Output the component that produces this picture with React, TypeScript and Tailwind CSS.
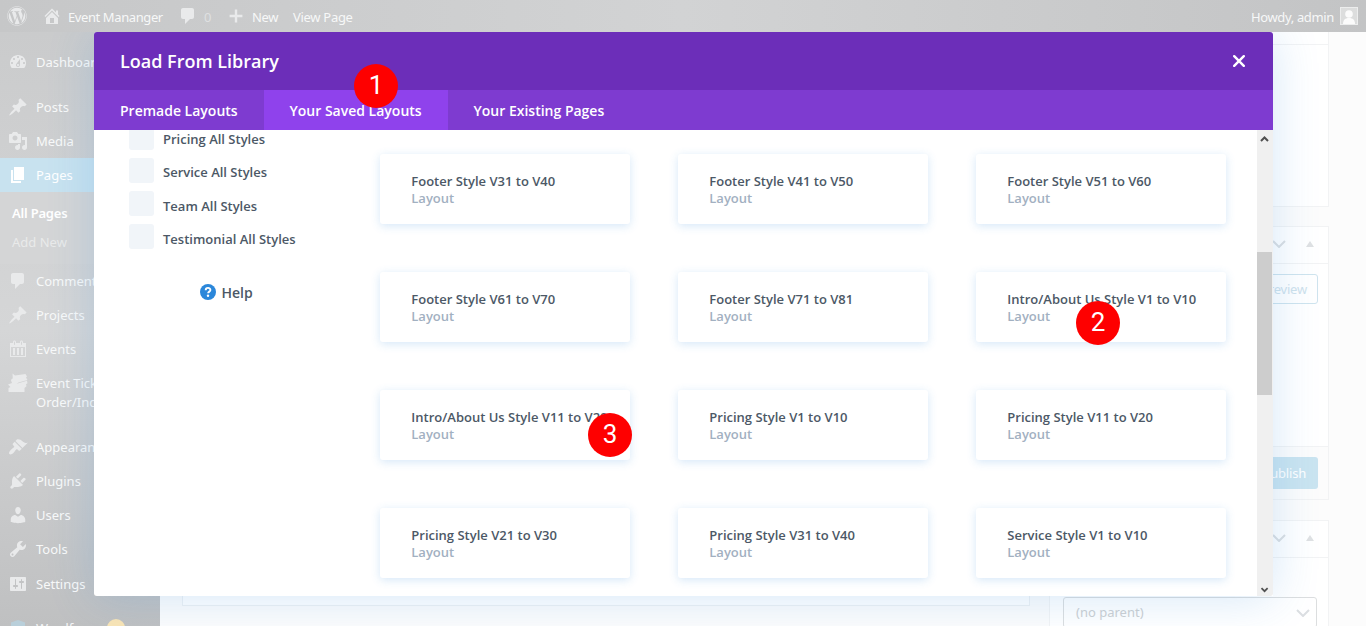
import type { ReactNode } from "react";
import { FaWordpress } from "react-icons/fa";

const ICONS = {
  dashboard:
    "M3.76 16h12.48c1.1-1.37 1.76-3.11 1.76-5 0-4.42-3.58-8-8-8s-8 3.58-8 8c0 1.89.66 3.63 1.76 5zM10 4c.55 0 1 .45 1 1s-.45 1-1 1-1-.45-1-1 .45-1 1-1zM6 6c.55 0 1 .45 1 1s-.45 1-1 1-1-.45-1-1 .45-1 1-1zm8 0c.55 0 1 .45 1 1s-.45 1-1 1-1-.45-1-1 .45-1 1-1zm-5.37 5.55L12 7v6c0 1.1-.9 2-2 2s-2-.9-2-2c0-.57.24-1.08.63-1.45zM4 10c.55 0 1 .45 1 1s-.45 1-1 1-1-.45-1-1 .45-1 1-1zm12 0c.55 0 1 .45 1 1s-.45 1-1 1-1-.45-1-1 .45-1 1-1zm-5 3c0-.55-.45-1-1-1s-1 .45-1 1 .45 1 1 1 1-.45 1-1z",
  pin: "M10.44 3.02l1.82-1.82 6.36 6.35-1.83 1.82c-1.05-.68-2.48-.57-3.41.36l-.75.75c-.92.93-1.04 2.35-.35 3.41l-1.83 1.82-2.41-2.41-2.8 2.79c-.42.42-3.38 2.71-3.8 2.29s1.86-3.39 2.28-3.81l2.79-2.79L4.1 9.36l1.83-1.82c1.05.69 2.48.57 3.4-.36l.75-.75c.93-.92 1.05-2.35.36-3.41z",
  media:
    "M13 11V4c0-.55-.45-1-1-1h-1.67L9 1H5L3.67 3H2c-.55 0-1 .45-1 1v7c0 .55.45 1 1 1h10c.55 0 1-.45 1-1zM7 4.5c1.38 0 2.5 1.12 2.5 2.5S8.38 9.5 7 9.5 4.5 8.38 4.5 7 5.62 4.5 7 4.5zM14 6h5v10.5c0 1.38-1.12 2.5-2.5 2.5S14 17.88 14 16.5s1.12-2.5 2.5-2.5c.17 0 .34.02.5.05V9h-3V6zm-4 8.05V13h2v3.5c0 1.38-1.12 2.5-2.5 2.5S7 17.88 7 16.5 8.12 14 9.5 14c.17 0 .34.02.5.05z",
  pages: "M6 15V2h10v13H6zm-1 1h8v2H3V5h2v11z",
  comments:
    "M5 2h9c1.1 0 2 .9 2 2v7c0 1.1-.9 2-2 2h-2l-5 5v-5H5c-1.1 0-2-.9-2-2V4c0-1.1.9-2 2-2z",
  calendar:
    "M15 4h3v14H2V4h3V3c0-.83.67-1.5 1.5-1.5S8 2.17 8 3v1h4V3c0-.83.67-1.5 1.5-1.5S15 2.17 15 3v1zM6 3v2.5c0 .28.22.5.5.5s.5-.22.5-.5V3c0-.28-.22-.5-.5-.5S6 2.72 6 3zm7 0v2.5c0 .28.22.5.5.5s.5-.22.5-.5V3c0-.28-.22-.5-.5-.5s-.5.22-.5.5zm4 14V8H3v9h14zM5 9h2v7H5zM9 9h2v7H9zM13 9h2v7h-2z",
  tickets:
    "M4.500 0.500l2.500 2L17.500 1l1.500 2.500-1 1 1.500 2.500-9 2.500-1.800 1.200L19 7.800l.5 2.500-1.500 1 .5 2L16.500 15v4H0.500v-4l2-1-2.500-2.500 4-1.500L2.800 7l2-1.800z",
  appearance:
    "M14.48 11.06L7.41 3.99l1.5-1.5c.5-.56 2.3-.47 3.51.32 1.21.8 1.43 1.28 2.91 2.1 1.18.64 2.45 1.26 4.45.85zm-.71.71L6.7 4.7 4.93 6.47c-.39.39-.39 1.02 0 1.41l1.06 1.06c.39.39.39 1.03 0 1.42-.6.6-1.43 1.11-2.21 1.69-.35.26-.7.53-1.01.84C1.43 14.23.4 16.08 1.4 17.07c.99 1 2.84-.03 4.18-1.36.31-.31.58-.66.85-1.02.57-.78 1.08-1.61 1.69-2.21.39-.39 1.02-.39 1.41 0l1.06 1.06c.39.39 1.02.39 1.41 0z",
  plugins:
    "M13.11 4.36L9.87 7.6 8 5.73l3.24-3.24c.35-.34 1.05-.2 1.56.32.52.51.66 1.21.31 1.55zm-8 1.77l.91-1.12 9.01 9.01-1.19.84c-.71.71-2.63 1.16-3.82 1.16H6.14L4.9 17.26c-.59.59-1.54.59-2.12 0-.59-.58-.59-1.53 0-2.12l1.24-1.24v-3.88c0-1.13.4-3.19 1.09-3.89zm7.26 3.97l3.24-3.24c.34-.35 1.04-.21 1.55.31.52.51.66 1.21.31 1.55l-3.24 3.25z",
  users:
    "M10 9.25c-2.27 0-2.73-3.44-2.73-3.44C7 4.02 7.82 2 9.97 2c2.16 0 2.98 2.02 2.71 3.81 0 0-.41 3.44-2.68 3.44zm0 2.57L12.72 10c2.39 0 4.52 2.33 4.52 4.53v2.49s-3.65 1.13-7.24 1.13c-3.65 0-7.24-1.13-7.24-1.13v-2.49c0-2.25 1.94-4.48 4.47-4.48z",
  tools:
    "M16.68 9.77c-1.34 1.34-3.3 1.67-4.95.99l-5.41 6.52c-.99.99-2.59.99-3.58 0s-.99-2.59 0-3.57l6.52-5.42c-.68-1.65-.35-3.61.99-4.95 1.28-1.28 3.12-1.62 4.72-1.06l-2.89 2.89 2.82 2.82 2.86-2.87c.53 1.58.18 3.39-1.08 4.65zM3.81 16.21c.4.39 1.04.39 1.43 0 .4-.4.4-1.04 0-1.43-.39-.4-1.03-.4-1.43 0-.39.39-.39 1.03 0 1.43z",
  settings:
    "M18 16V4c0-.55-.45-1-1-1H3c-.55 0-1 .45-1 1v12c0 .55.45 1 1 1h14c.55 0 1-.45 1-1zM8 11h1c.55 0 1 .45 1 1s-.45 1-1 1H8v1.5c0 .28-.22.5-.5.5s-.5-.22-.5-.5V13H6c-.55 0-1-.45-1-1s.45-1 1-1h1V5.5c0-.28.22-.5.5-.5s.5.22.5.5V11zm5-2h-1c-.55 0-1-.45-1-1s.45-1 1-1h1V5.5c0-.28.22-.5.5-.5s.5.22.5.5V7h1c.55 0 1 .45 1 1s-.45 1-1 1h-1v5.500c0 .28-.22.5-.5.5s-.5-.22-.5-.5V9z",
  home: "M16 8.5l1.53 1.53-1.06 1.06L10 4.6l-6.47 6.49-1.06-1.06L10 2.5l4 4v-2h2v4zm-6-2.46l6 5.99V18H4v-5.97zM12 17v-5H8v5h4z",
  plus: "M18 8.500v3h-6.500V18h-3v-6.500H2v-3h6.500V2h3v6.500z",
  shield: "M10 1l7 2.500V10c0 4-3 7-7 9-4-2-7-5-7-9V3.500z",
};

type IconName = keyof typeof ICONS;

function DashIcon({ name, className = "size-5" }: { name: IconName; className?: string }) {
  return (
    <svg viewBox="0 0 20 20" className={className} fill="currentColor" fillRule="evenodd">
      <path d={ICONS[name]} />
    </svg>
  );
}

function MenuItem({ icon, active, children }: { icon: IconName; active?: boolean; children: ReactNode }) {
  return (
    <div
      className={`flex min-h-[34px] shrink-0 whitespace-nowrap text-[13px] leading-[19px] ${
        active ? "bg-[#c8e2ef] text-white" : "text-[#f8f9f9]"
      }`}
    >
      <div className={`flex w-9 shrink-0 justify-center pt-[7px] ${active ? "text-white" : "text-[#e9eaeb]"}`}>
        <DashIcon name={icon} />
      </div>
      <div className="pt-[8px]">{children}</div>
    </div>
  );
}

function Sidebar() {
  return (
    <nav className="flex w-40 shrink-0 flex-col overflow-hidden bg-linear-to-b from-[#cacbcc] via-[#d5d6d7] to-[#bfc0c1] pt-[13px]">
      <MenuItem icon="dashboard">Dashboard</MenuItem>
      <div className="h-[11px] shrink-0" />
      <MenuItem icon="pin">Posts</MenuItem>
      <MenuItem icon="media">Media</MenuItem>
      <MenuItem icon="pages" active>
        Pages
      </MenuItem>
      <div className="h-[72px] shrink-0 bg-[#d4d5d6] pt-[7px] pl-3 text-[13px] leading-[29px]">
        <div className="font-semibold tracking-[-0.2px] text-white">All Pages</div>
        <div className="text-[#e9eaea]">Add New</div>
      </div>
      <MenuItem icon="comments">Comments</MenuItem>
      <MenuItem icon="pin">Projects</MenuItem>
      <MenuItem icon="calendar">Events</MenuItem>
      <MenuItem icon="tickets">
        Event Tickets
        <br />
        Order/Incomplete
      </MenuItem>
      <div className="h-[18px] shrink-0" />
      <MenuItem icon="appearance">Appearance</MenuItem>
      <MenuItem icon="plugins">Plugins</MenuItem>
      <MenuItem icon="users">Users</MenuItem>
      <MenuItem icon="tools">Tools</MenuItem>
      <div className="h-px shrink-0" />
      <MenuItem icon="settings">Settings</MenuItem>
      <div className="mt-[11px] flex shrink-0 text-[13px] leading-[19px] text-[#f5f6f6]">
        <div className="flex w-9 justify-center pt-[7px] text-[#b9cfda]">
          <DashIcon name="shield" />
        </div>
        <span className="w-[71px] pt-[7px]">Wordfence</span>
        <span className="mt-[7px] size-[18px] rounded-full bg-[#fae5b5]" />
      </div>
    </nav>
  );
}

function AdminBar() {
  return (
    <header className="flex h-8 shrink-0 items-center bg-linear-to-r from-[#c6c7c8] via-[#d2d3d4] to-[#c3c4c5] text-[13px] text-[#f7f8f8]">
      <FaWordpress className="ml-[7px] size-5 text-[#e9eaeb]" />
      <DashIcon name="home" className="ml-[15px] size-5 text-[#e9eaeb]" />
      <span className="ml-[6px] w-[110px] pt-[3px] tracking-[-0.4px]">Event Mananger</span>
      <DashIcon name="comments" className="size-5 text-[#e9eaeb]" />
      <span className="ml-[6px] w-[24px] pt-[3px] text-[#dfe0e1]">0</span>
      <DashIcon name="plus" className="size-4 text-[#e9eaeb]" />
      <span className="ml-[8px] w-[41px] pt-[3px] tracking-[-0.35px]">New</span>
      <span className="pt-[3px] tracking-[-0.3px]">View Page</span>
      <span className="ml-auto pt-[3px] tracking-[-0.35px]">Howdy, admin</span>
      <div className="mr-[8px] ml-[6px] flex size-[18px] items-end justify-center border border-[#eceded] bg-[#dcdddd]">
        <svg viewBox="0 0 16 16" className="size-4" fill="#fbfbfb">
          <circle cx="8" cy="6" r="3.800" />
          <path d="M2 16c0-4 2-6 6-6s6 2 6 6z" />
        </svg>
      </div>
    </header>
  );
}

function Chevron() {
  return (
    <svg viewBox="0 0 14 8" className="h-2 w-3.5" fill="none" stroke="#dcdfe2" strokeWidth="2">
      <path d="M1 1l6 6 6-6" />
    </svg>
  );
}

function BoxHeader() {
  return (
    <div className="flex h-[37px] items-center justify-end gap-[20px] border-b border-[#f2f3f4] pr-[14px] pb-[2px]">
      <Chevron />
      <svg viewBox="0 0 8 6" className="h-1.5 w-2" fill="#dfe1e3">
        <path d="M4 0l4 6H0z" />
      </svg>
    </div>
  );
}

function EditorPage() {
  return (
    <main className="flex min-w-0 grow justify-between bg-[#fcfcfc] pl-[22px]">
      <div className="h-[574px] w-[848px] border border-[#eef1f4] bg-white" />
      <div className="mr-[37px] flex w-[280px] flex-col gap-[19px]">
        <div className="h-[175px] shrink-0 border border-t-0 border-[#f2f3f4] bg-white">
          <div className="h-[13px] border-b border-[#f2f3f4]" />
        </div>
        <div className="flex h-[274px] shrink-0 flex-col border border-[#f2f3f4] bg-white">
          <BoxHeader />
          <div className="flex grow justify-end pt-[10px] pr-[10px]">
            <div className="h-[30px] rounded-[3px] border border-[#cfe4ee] bg-white px-[10px] text-[13px] leading-[29px] tracking-[-0.2px] text-[#cfe2ec]">
              Preview
            </div>
          </div>
          <div className="flex h-[53px] justify-end border-t border-[#f2f3f4] bg-[#fcfcfc] pt-[10px] pr-[10px]">
            <div className="h-8 rounded-[3px] bg-[#cae4f0] px-3 text-[13px] leading-8 tracking-[-0.2px] text-white">
              Publish
            </div>
          </div>
        </div>
        <div className="mt-px h-[140px] shrink-0 border border-[#f2f3f4] bg-white">
          <BoxHeader />
          <div className="mt-[39px] ml-[13px] flex h-[31px] w-[254px] items-center justify-between rounded-[3px] border border-[#dcdedf] pr-[6px] pl-3 text-[13px] text-[#cdd0d2]">
            (no parent)
            <Chevron />
          </div>
        </div>
      </div>
    </main>
  );
}

const CATEGORIES = ["Pricing All Styles", "Service All Styles", "Team All Styles", "Testimonial All Styles"];

const LAYOUTS = [
  "Footer Style V31 to V40",
  "Footer Style V41 to V50",
  "Footer Style V51 to V60",
  "Footer Style V61 to V70",
  "Footer Style V71 to V81",
  "Intro/About Us Style V1 to V10",
  "Intro/About Us Style V11 to V20",
  "Pricing Style V1 to V10",
  "Pricing Style V11 to V20",
  "Pricing Style V21 to V30",
  "Pricing Style V31 to V40",
  "Service Style V1 to V10",
];

function LibraryModal() {
  return (
    <div className="absolute top-8 left-[94px] flex h-[564px] w-[1179px] flex-col overflow-hidden rounded-[3px] bg-white font-['Open_Sans',sans-serif] font-semibold">
      <div className="flex h-[58px] shrink-0 items-center justify-between bg-[#6c2eb9] pr-[28px] pl-[26px] text-white">
        <h1 className="text-[18px]">Load From Library</h1>
        <svg viewBox="0 0 12 12" className="size-3" stroke="currentColor" strokeWidth="2.400" strokeLinecap="round">
          <path d="M1.200 1.200l9.600 9.600M10.800 1.200l-9.600 9.600" />
        </svg>
      </div>

      <div className="flex h-10 shrink-0 bg-[#7e3bd0] text-[14px] leading-[41px] text-white">
        <div className="w-[170px] pl-[26px]">Premade Layouts</div>
        <div className="w-[184px] bg-[#8f42ec] pl-[25.5px]">Your Saved Layouts</div>
        <div className="pl-[25.5px]">Your Existing Pages</div>
      </div>

      <div className="flex h-[466px] overflow-hidden">
        <aside className="w-[286px] shrink-0 text-[#4c5866]">
          <div className="-mt-[5px] ml-[35px] flex flex-col gap-2">
            {CATEGORIES.map((name) => (
              <div
                key={name}
                className="flex h-[25px] gap-[9px] text-[13px] leading-[29px] nth-[n+3]:leading-[31px]"
              >
                <span className="size-[25px] rounded-[3px] bg-[#f1f5f9]" />
                {name}
              </div>
            ))}
          </div>
          <div className="mt-[34px] ml-[106px] flex items-center gap-[5.500px] text-[14px] leading-5">
            <svg viewBox="0 0 16 16" className="size-4">
              <circle cx="8" cy="8" r="8" fill="#2b87da" />
              <path
                d="M5.700 6.200c0-3 4.700-3 4.700-.2 0 1.700-2.300 1.600-2.300 3.300"
                fill="none"
                stroke="#fff"
                strokeWidth="1.900"
              />
              <circle cx="8" cy="11.800" r="1.200" fill="#fff" />
            </svg>
            <span className="-mb-0.5">Help</span>
          </div>
        </aside>

        <div className="grid grid-cols-[250px_250px_250px] content-start gap-12 pt-6">
          {LAYOUTS.map((name) => (
            <div
              key={name}
              className="h-[70px] rounded-[3px] bg-white pt-[19px] pl-[31.3px] text-[13px] leading-[17px] whitespace-nowrap text-[#4c5866] shadow-[0_2px_10px_rgba(43,135,218,0.2)]"
            >
              {name}
              <div className="text-[#a2b0c1]">Layout</div>
            </div>
          ))}
        </div>

        <div className="ml-auto flex w-4 flex-col items-start bg-[#f0f0f0]">
          <svg viewBox="0 0 16 16" className="h-[17px] w-4" fill="none" stroke="#505050" strokeWidth="2">
            <path d="M4 10.500l3.500-3.500 3.500 3.500" />
          </svg>
          <div className="mt-[105px] h-[143px] w-[15px] bg-[#cdcdcd]" />
          <svg viewBox="0 0 16 16" className="mt-auto h-3.5 w-4" fill="none" stroke="#505050" strokeWidth="2">
            <path d="M4 7l3.500 3.500L11 7" />
          </svg>
        </div>
      </div>
    </div>
  );
}

function Marker({ className, children }: { className: string; children: ReactNode }) {
  return (
    <div
      className={`absolute size-11 rounded-full bg-[#fe0000] text-center font-[Roboto,sans-serif] text-[26px] leading-[42px] text-white ${className}`}
    >
      {children}
    </div>
  );
}

export default function App() {
  return (
    <div className="relative flex h-[626px] w-[1366px] flex-col overflow-hidden bg-[#fcfcfc] font-['Noto_Sans',sans-serif]">
      <AdminBar />
      <div className="flex h-[594px]">
        <Sidebar />
        <EditorPage />
      </div>
      {/* glow behind the modal, kept below the admin bar */}
      <div className="absolute inset-x-0 top-8 bottom-0 overflow-hidden">
        <div className="ml-[94px] h-[564px] w-[1179px] shadow-[0_2px_44px_rgba(43,135,218,0.2)]" />
      </div>
      <LibraryModal />
      <Marker className="top-16 left-[354px]">1</Marker>
      <Marker className="top-[301px] left-[1076px]">2</Marker>
      <Marker className="top-[413px] left-[588px]">3</Marker>
    </div>
  );
}
